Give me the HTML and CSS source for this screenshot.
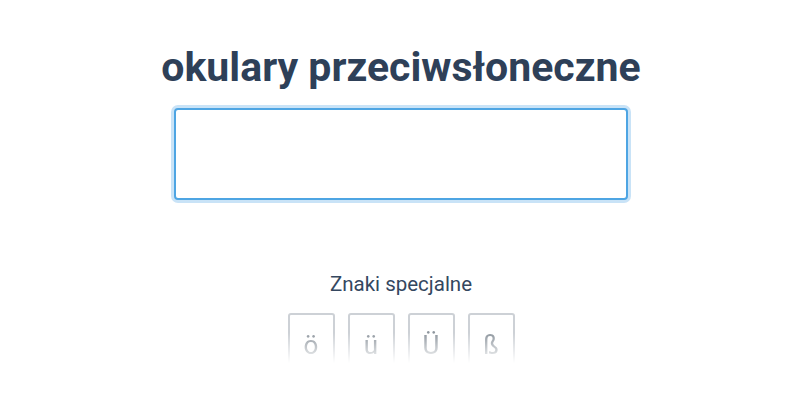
FILE: index.html
```html
<!DOCTYPE html>
<html lang="pl">
<head>
<meta charset="utf-8">
<title>okulary przeciwsłoneczne</title>
<link rel="stylesheet" href="styles.css">
</head>
<body>
<main class="page">
  <h1 class="word">okulary przeciwsłoneczne</h1>
  <input class="answer" type="text" aria-label="Odpowiedź">
  <section class="special">
    <h2 class="special-title">Znaki specjalne</h2>
    <div class="keys">
      <button class="key" type="button">ö</button>
      <button class="key" type="button">ü</button>
      <button class="key" type="button">Ü</button>
      <button class="key" type="button">ß</button>
    </div>
  </section>
</main>
</body>
</html>
```
FILE: styles.css
```css
html, body {
  margin: 0;
  padding: 0;
  background: #ffffff;
}
body {
  font-family: Roboto, "Liberation Sans", Arial, sans-serif;
  color: #2c3e56;
}
.page {
  width: 800px;
  height: 400px;
  padding-left: 2px;
  box-sizing: border-box;
  display: flex;
  flex-direction: column;
  align-items: center;
  overflow: hidden;
}
.word {
  margin: 40px 0 0;
  font-size: 41px;
  line-height: 54px;
  font-weight: 700;
  color: #2e4058;
  letter-spacing: 0;
}
.answer {
  box-sizing: border-box;
  margin-top: 14px;
  width: 454px;
  height: 92px;
  border: 2px solid #4ea5e3;
  border-radius: 4px;
  box-shadow: 0 0 0 3px #c9e3f7;
  outline: none;
  background: #fff;
  font-family: inherit;
  font-size: 24px;
  padding: 0 12px;
}
.special {
  margin-top: 70px;
  display: flex;
  flex-direction: column;
  align-items: center;
}
.special-title {
  margin: 0;
  font-size: 20.5px;
  line-height: 28px;
  font-weight: 400;
  color: #34475f;
}
.keys {
  margin-top: 15px;
  display: flex;
  gap: 13px;
  -webkit-mask-image: linear-gradient(to bottom, #000 0px, #000 20px, transparent 50px);
  mask-image: linear-gradient(to bottom, #000 0px, #000 20px, transparent 50px);
}
.key {
  box-sizing: border-box;
  min-width: 47px;
  height: 60px;
  padding: 15px 11px 0;
  border: 2px solid #cdd1d6;
  border-radius: 3px;
  background: #fff;
  font-family: inherit;
  font-size: 26px;
  line-height: 30px;
  color: #8f979f;
  display: flex;
  align-items: flex-start;
  justify-content: center;
}
```
